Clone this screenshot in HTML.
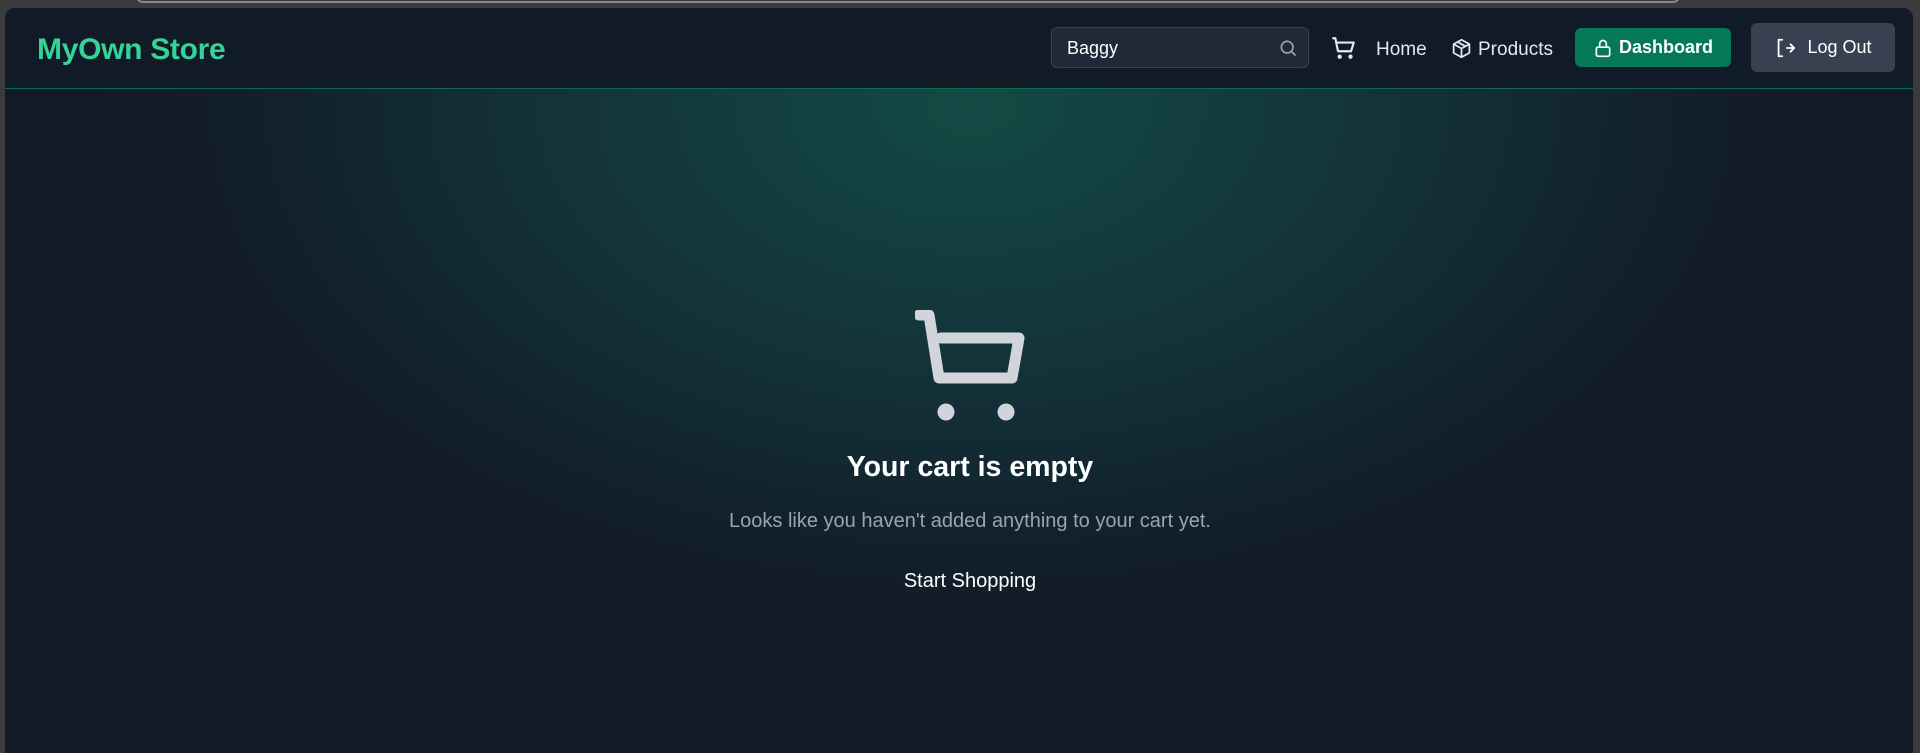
<!DOCTYPE html>
<html><head><meta charset="utf-8"><style>
*{box-sizing:border-box;margin:0;padding:0}
html,body{width:1920px;height:745px;overflow:hidden;background:#3b3b3b;font-family:"Liberation Sans",sans-serif}
.tab{position:absolute;left:135px;top:-6px;width:1546px;height:9px;border:2px solid #8a8a8a;border-top:none;border-radius:0 0 8px 8px;background:#3b3b3b}
.win{position:absolute;left:5px;top:8px;width:1908px;height:745px;border-radius:10px 10px 0 0;overflow:hidden;
background:radial-gradient(ellipse 900px 560px at 965px 100px,#134a44 0%,#13333a 45%,#121d29 85%,#111b27 100%)}
.hdr{position:absolute;left:0;top:0;width:100%;height:81px;background:#111a27;border-bottom:1px solid #0f6a4c}
.logo{position:absolute;left:32px;top:25px;font-size:30px;font-weight:bold;color:#34d399;letter-spacing:-0.3px}
.search{position:absolute;left:1046px;top:19px;width:258px;height:41px;background:#1f2937;border:1px solid #374151;border-radius:6px;color:#fff;font-size:18px;padding:10px 15px}
.search svg{position:absolute;right:10px;top:10px}
.nav{position:absolute;color:#e5e7eb;font-size:19px;top:31px}
.btn{position:absolute;border-radius:6px;color:#fff;font-size:18px;display:flex;align-items:center;justify-content:center;gap:6px}
.c{position:absolute;left:0;width:100%;text-align:center;padding-left:22px}
</style></head><body>
<div class="tab"></div>
<div class="win">
<div class="hdr">
<div class="logo">MyOwn Store</div>
<div class="search">Baggy<svg width="20" height="20" viewBox="0 0 24 24" fill="none" stroke="#9ca3af" stroke-width="2"><circle cx="11" cy="11" r="7"/><path d="M16 16l5 5"/></svg></div>
<svg style="position:absolute;left:1326px;top:27px" width="26" height="26" viewBox="0 0 24 24" fill="none" stroke="#e5e7eb" stroke-width="2" stroke-linecap="round" stroke-linejoin="round"><path d="M2 3h2l2.5 12h12L21 7H5.3"/><circle cx="8" cy="20" r="1" fill="#e5e7eb"/><circle cx="18" cy="20" r="1" fill="#e5e7eb"/></svg>
<div class="nav" style="left:1371px">Home</div>
<svg style="position:absolute;left:1446px;top:30px" width="21" height="21" viewBox="0 0 24 24" fill="none" stroke="#e5e7eb" stroke-width="2" stroke-linejoin="round"><path d="M12 2l9 5v10l-9 5-9-5V7z"/><path d="M3 7l9 5 9-5M12 12v10M7.5 4.5l9 5"/></svg>
<div class="nav" style="left:1473px">Products</div>
<div class="btn" style="left:1570px;top:20px;width:156px;height:39px;background:#047857;font-weight:bold"><svg width="20" height="22" viewBox="0 0 24 24" fill="none" stroke="#fff" stroke-width="2"><rect x="4" y="11" width="16" height="11" rx="2"/><path d="M8 11V7a4 4 0 018 0v4"/></svg>Dashboard</div>
<div class="btn" style="left:1746px;top:15px;width:144px;height:49px;background:#374151"><svg width="22" height="22" viewBox="0 0 24 24" fill="none" stroke="#fff" stroke-width="2" stroke-linecap="round" stroke-linejoin="round"><path d="M9 3H5v18h4M14 12h8M18 8l4 4-4 4"/></svg>&nbsp;Log Out</div>
</div>
<svg style="position:absolute;left:910px;top:302px" width="128" height="114" viewBox="0 0 128 114" fill="none" stroke="#d1d5db" stroke-width="11" stroke-linecap="round" stroke-linejoin="round"><path d="M4 5h10l10 63h73l7-40H26"/><circle cx="31" cy="102" r="8.5" fill="#d1d5db" stroke="none"/><circle cx="91" cy="102" r="8.5" fill="#d1d5db" stroke="none"/></svg>
<div class="c" style="top:443px;font-size:28.5px;font-weight:bold;color:#fff">Your cart is empty</div>
<div class="c" style="top:502px;font-size:20px;color:#9ca3af">Looks like you haven't added anything to your cart yet.</div>
<div class="c" style="top:562px;font-size:20px;color:#fff">Start Shopping</div>
</div>
</body></html>
